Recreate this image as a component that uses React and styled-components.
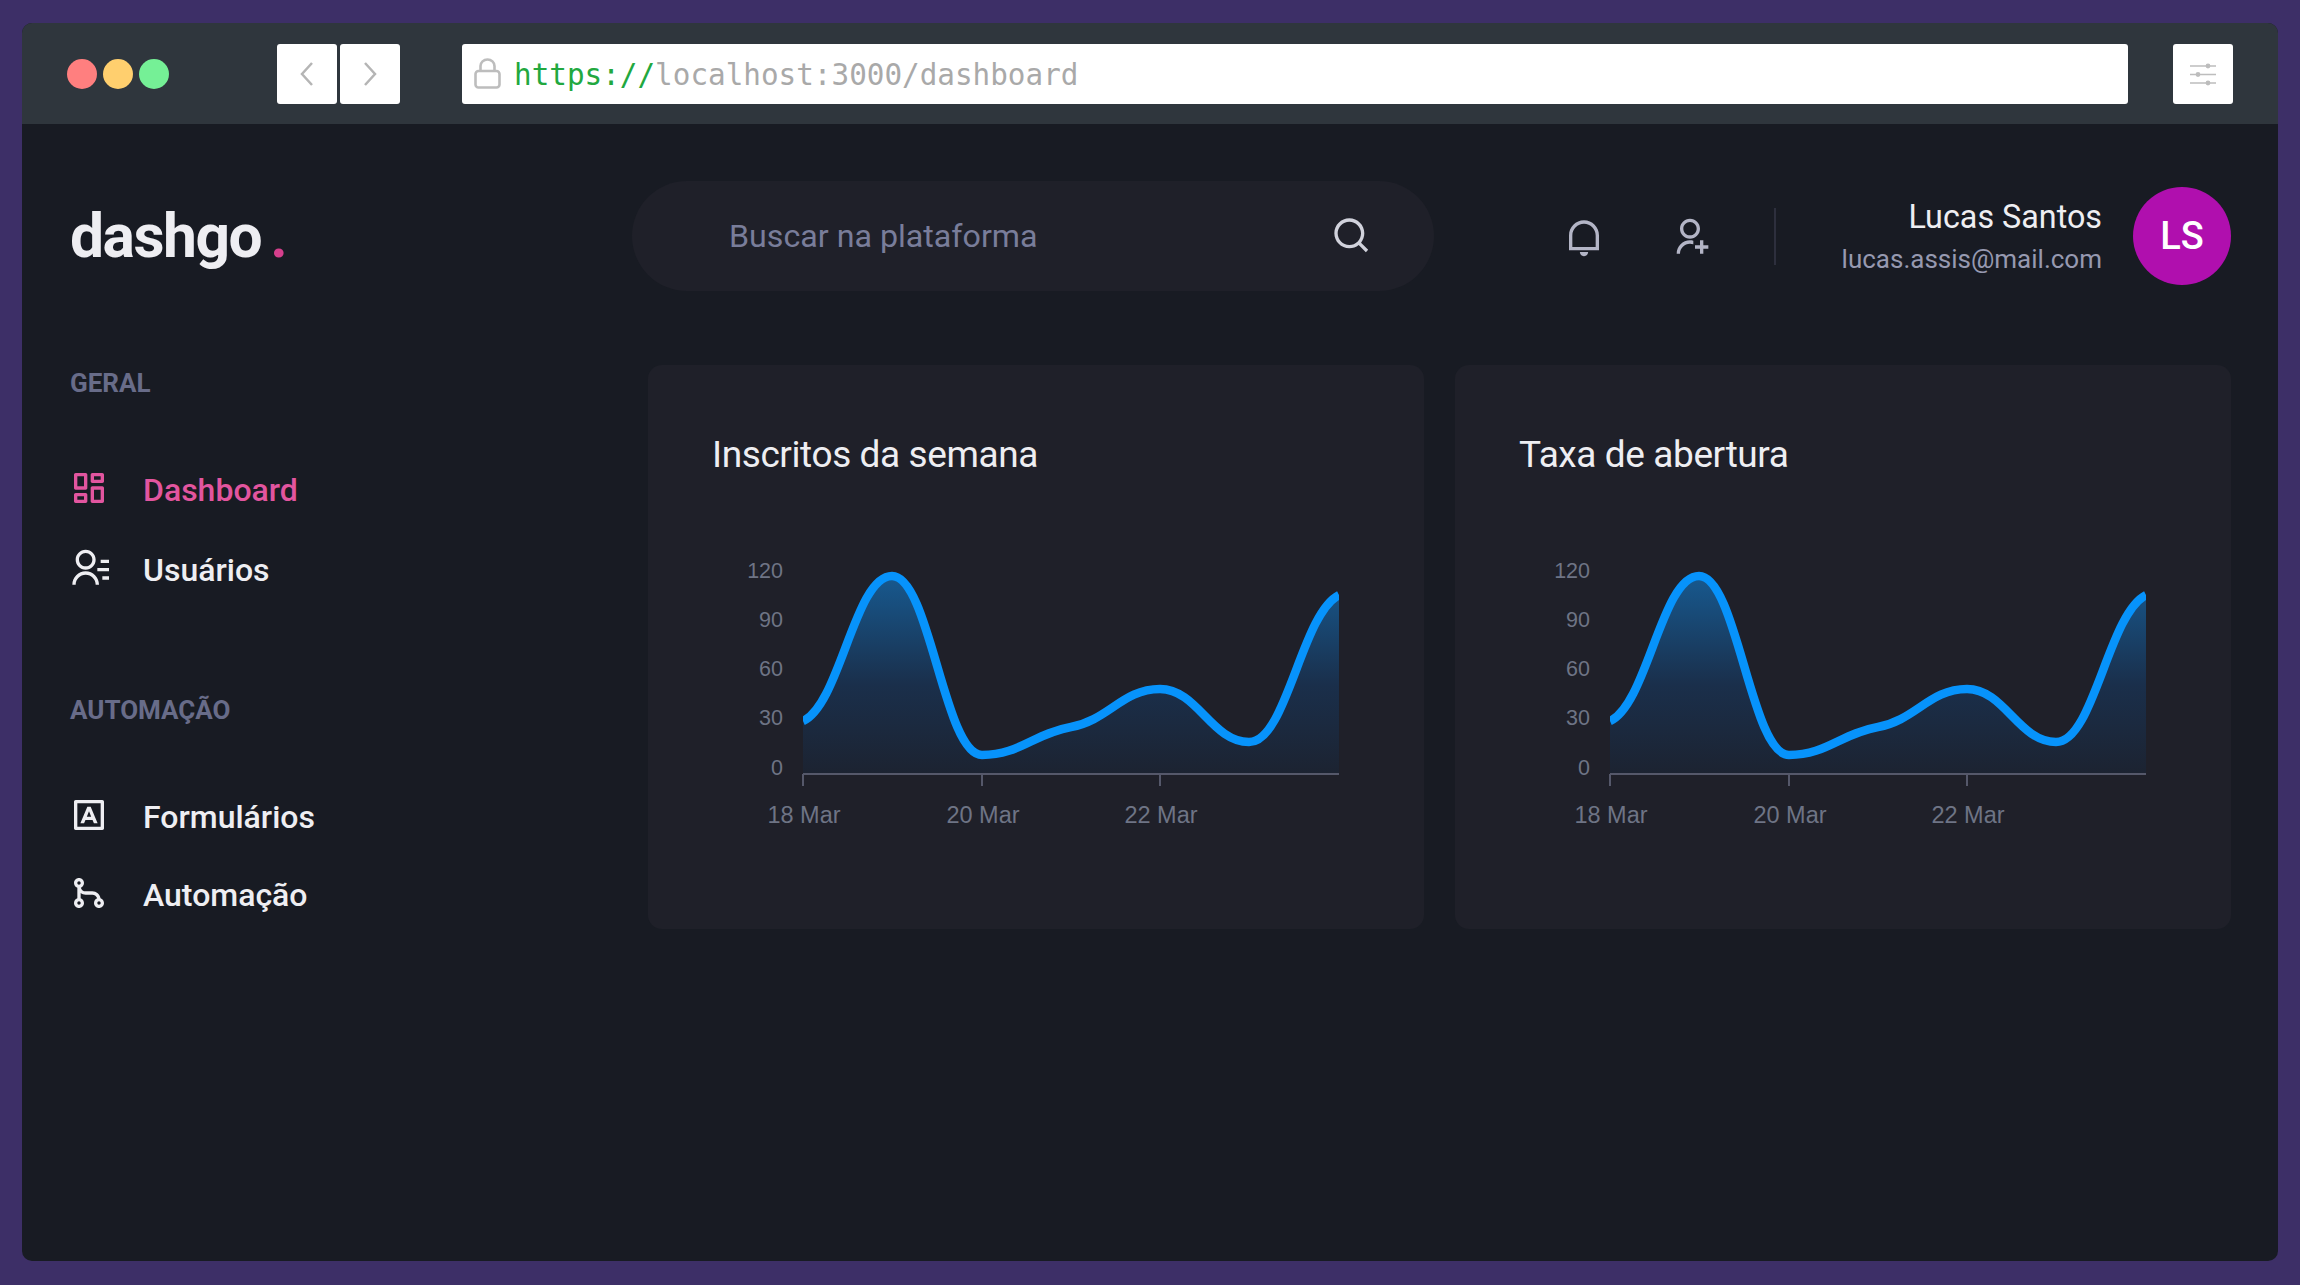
import React from "react";
import styled, { createGlobalStyle } from "styled-components";
import {
  RiDashboardLine,
  RiContactsLine,
  RiInputMethodLine,
  RiGitMergeLine,
  RiNotificationLine,
  RiUserAddLine,
  RiSearchLine,
} from "react-icons/ri";

const GlobalStyle = createGlobalStyle`
  html, body { margin: 0; padding: 0; }
  body { background: #3d2f67; font-family: Roboto, "Liberation Sans", sans-serif; }
  * { box-sizing: border-box; }
`;

const Page = styled.div`
  height: 1285px;
  padding: 23px 22px 24px;
`;

const Browser = styled.div`
  height: 100%;
  display: flex;
  flex-direction: column;
  background: #181b23;
  border-radius: 10px;
  overflow: hidden;
`;

const Toolbar = styled.div`
  height: 101px;
  flex: none;
  display: flex;
  align-items: center;
  padding: 0 45px;
  background: #2f363d;
`;

const Lights = styled.div`
  display: flex;
  gap: 6px;
  margin-right: 108px;
`;

const Light = styled.span`
  width: 30px;
  height: 30px;
  border-radius: 50%;
  background: ${(p) => p.$color};
`;

const NavButtons = styled.div`
  display: flex;
  gap: 3px;
  margin-right: 62px;
`;

const ToolButton = styled.div`
  width: 60px;
  height: 60px;
  flex: none;
  display: flex;
  align-items: center;
  justify-content: center;
  background: #fff;
  border-radius: 3px;
`;

const UrlBar = styled.div`
  flex: none;
  width: 1666px;
  height: 60px;
  display: flex;
  align-items: center;
  gap: 13px;
  padding-left: 12px;
  margin-right: 45px;
  background: #fff;
  border-radius: 3px;
  font-family: "DejaVu Sans Mono", monospace;
  font-size: 29.3px;
  color: #a9a9a9;
`;

const UrlText = styled.span`
  padding-top: 2px;
`;

const Scheme = styled.span`
  color: #22a83f;
`;

const Main = styled.div`
  flex: 1;
  padding: 56px 47px 0 48px;
`;

const Header = styled.header`
  height: 112px;
  display: flex;
  align-items: center;
`;

const Logo = styled.div`
  flex: 0 0 562px;
  font-size: 60.5px;
  font-weight: 700;
  letter-spacing: -1.5px;
  color: #eeeef2;
`;

const LogoDot = styled.span`
  margin-left: 9px;
  color: #d53f8c;
`;

const SearchBox = styled.div`
  flex: 0 0 802px;
  height: 110px;
  display: flex;
  align-items: center;
  justify-content: space-between;
  padding: 0 63px 0 97px;
  background: #1f2029;
  border-radius: 55px;
  font-size: 32.2px;
  color: #797d9a;
  svg { color: #d1d2dc; margin-top: -2px; }
`;

const Actions = styled.div`
  display: flex;
  align-items: center;
  gap: 66px;
  margin-left: 130px;
  padding-top: 2px;
  color: #b3b5c6;
`;

const Divider = styled.div`
  width: 2px;
  height: 57px;
  margin-left: 64px;
  background: #2d2f3d;
`;

const Profile = styled.div`
  margin-left: auto;
  display: flex;
  align-items: center;
  gap: 31px;
`;

const ProfileText = styled.div`
  padding-top: 3px;
  text-align: right;
`;

const ProfileName = styled.div`
  font-size: 32.3px;
  line-height: 42px;
  color: #eeeef2;
`;

const ProfileMail = styled.div`
  font-size: 26px;
  line-height: 42px;
  color: #9699b0;
`;

const Avatar = styled.div`
  width: 98px;
  height: 98px;
  display: flex;
  align-items: center;
  justify-content: center;
  border-radius: 50%;
  background: #b00fae;
  color: #fff;
  font-size: 38px;
  font-weight: 500;
`;

const Content = styled.div`
  display: flex;
  margin-top: 73px;
`;

const Sidebar = styled.nav`
  flex: 0 0 578px;
`;

const Section = styled.section`
  margin-bottom: 102px;
`;

const SectionTitle = styled.div`
  font-size: 26px;
  line-height: 36px;
  font-weight: 700;
  color: #686c89;
  margin-bottom: 69px;
`;

const NavList = styled.div`
  display: flex;
  flex-direction: column;
  gap: ${(p) => p.$gap}px;
`;

const NavItem = styled.a`
  height: 40px;
  display: flex;
  align-items: center;
  gap: 34px;
  margin-left: -1px;
  font-size: 32px;
  font-weight: 500;
  color: ${(p) => (p.$active ? "#e2559f" : "#eeeef2")};
  svg { margin-top: -4px; }
`;

const Cards = styled.div`
  flex: 1;
  display: grid;
  grid-template-columns: 1fr 1fr;
  gap: 31px;
`;

const Card = styled.div`
  height: 564px;
  padding: 65px 64px 0;
  background: #1f2029;
  border-radius: 14px;
`;

const CardTitle = styled.h2`
  margin: 0 0 54px;
  font-size: 37px;
  line-height: 50px;
  font-weight: 400;
  color: #eeeef2;
  letter-spacing: -0.4px;
`;

const ChartBox = styled.svg`
  display: block;
  width: 647px;
  height: 280px;
  overflow: visible;
  text {
    font-family: "Liberation Sans", Arial, sans-serif;
    fill: #6e7485;
  }
`;

// chart points, in svg coordinates, with the slope at each point
const points = [
  [91, 187, -0.45],
  [180, 42, 0],
  [270, 221, 0],
  [359, 193, -0.18],
  [448, 155, 0],
  [537, 208, 0],
  [627, 61, -0.5],
];
const AXIS_Y = 240;

const buildLine = () => {
  let d = `M${points[0][0]} ${points[0][1]}`;
  for (let i = 1; i < points.length; i++) {
    const [x0, y0, m0] = points[i - 1];
    const [x1, y1, m1] = points[i];
    const k = (x1 - x0) * 0.42;
    d += ` C${x0 + k} ${y0 + m0 * k} ${x1 - k} ${y1 - m1 * k} ${x1} ${y1}`;
  }
  return d;
};

const yTicks = [
  ["120", 44],
  ["90", 93],
  ["60", 142],
  ["30", 191],
  ["0", 241],
];
const xTicks = [
  ["18 Mar", 91],
  ["20 Mar", 270],
  ["22 Mar", 448],
];

function Chart({ id }) {
  const line = buildLine();
  return (
    <ChartBox viewBox="0 0 647 280">
      <defs>
        <linearGradient id={id} x1="0" y1="42" x2="0" y2={AXIS_Y} gradientUnits="userSpaceOnUse">
          <stop offset="0" stopColor="#17598f" />
          <stop offset="0.55" stopColor="#1a2f4b" />
          <stop offset="1" stopColor="#1c2331" />
        </linearGradient>
        <clipPath id={`${id}-clip`}>
          <rect x="91" y="0" width="536" height="260" />
        </clipPath>
      </defs>
      <path d={`${line} L627 ${AXIS_Y} L91 ${AXIS_Y} Z`} fill={`url(#${id})`} />
      <path d={line} fill="none" stroke="#0793fb" strokeWidth="8.5" clipPath={`url(#${id}-clip)`} />
      <path d={`M91 ${AXIS_Y}H627`} stroke="#55586a" strokeWidth="2" />
      {xTicks.map(([label, x]) => (
        <g key={label}>
          <path d={`M${x} ${AXIS_Y}v12`} stroke="#55586a" strokeWidth="2" />
          <text x={x + 1} y="289" textAnchor="middle" fontSize="23.5">{label}</text>
        </g>
      ))}
      {yTicks.map(([label, y]) => (
        <text key={label} x="71" y={y} textAnchor="end" fontSize="21.5">{label}</text>
      ))}
    </ChartBox>
  );
}

const menu = [
  { title: "GERAL", gap: 40, items: [
    { label: "Dashboard", Icon: RiDashboardLine, active: true },
    { label: "Usuários", Icon: RiContactsLine },
  ] },
  { title: "AUTOMAÇÃO", gap: 38, items: [
    { label: "Formulários", Icon: RiInputMethodLine },
    { label: "Automação", Icon: RiGitMergeLine },
  ] },
];

export default function App() {
  return (
    <Page>
      <GlobalStyle />
      <Browser>
        <Toolbar>
          <Lights>
            <Light $color="#ff7f7f" />
            <Light $color="#ffcf6e" />
            <Light $color="#75f096" />
          </Lights>
          <NavButtons>
            <ToolButton>
              <svg width="16" height="26" viewBox="0 0 16 26" fill="none" stroke="#b5b5b5" strokeWidth="2.5"><path d="M13 2 3 13l10 11" /></svg>
            </ToolButton>
            <ToolButton>
              <svg width="16" height="26" viewBox="0 0 16 26" fill="none" stroke="#b5b5b5" strokeWidth="2.5"><path d="m3 2 10 11L3 24" /></svg>
            </ToolButton>
          </NavButtons>
          <UrlBar>
            <svg width="27" height="31" viewBox="0 0 27 31" fill="none" stroke="#bdbdbd" strokeWidth="2.6">
              <rect x="1.5" y="13" width="24" height="16.5" rx="3" />
              <path d="M6.5 13V8a7 6.5 0 0 1 14 0v5" />
            </svg>
            <UrlText><Scheme>https://</Scheme>localhost:3000/dashboard</UrlText>
          </UrlBar>
          <ToolButton>
            <svg width="28" height="24" viewBox="0 0 28 24" fill="#bdbdbd" stroke="#bdbdbd" strokeWidth="1.6">
              <path d="M1 4h26M1 12.500h26M1 21h26" />
              <circle cx="19" cy="4" r="1.600" />
              <circle cx="9" cy="12.500" r="1.600" />
              <circle cx="19" cy="21" r="1.600" />
            </svg>
          </ToolButton>
        </Toolbar>
        <Main>
          <Header>
            <Logo>dashgo<LogoDot>.</LogoDot></Logo>
            <SearchBox>
              <span>Buscar na plataforma</span>
              <RiSearchLine size={40} />
            </SearchBox>
            <Actions>
              <RiNotificationLine size={40} />
              <RiUserAddLine size={40} />
            </Actions>
            <Divider />
            <Profile>
              <ProfileText>
                <ProfileName>Lucas Santos</ProfileName>
                <ProfileMail>lucas.assis@mail.com</ProfileMail>
              </ProfileText>
              <Avatar>LS</Avatar>
            </Profile>
          </Header>
          <Content>
            <Sidebar>
              {menu.map((section) => (
                <Section key={section.title}>
                  <SectionTitle>{section.title}</SectionTitle>
                  <NavList $gap={section.gap}>
                    {section.items.map(({ label, Icon, active }) => (
                      <NavItem key={label} $active={active}>
                        <Icon size={40} />
                        {label}
                      </NavItem>
                    ))}
                  </NavList>
                </Section>
              ))}
            </Sidebar>
            <Cards>
              <Card>
                <CardTitle>Inscritos da semana</CardTitle>
                <Chart id="week" />
              </Card>
              <Card>
                <CardTitle>Taxa de abertura</CardTitle>
                <Chart id="rate" />
              </Card>
            </Cards>
          </Content>
        </Main>
      </Browser>
    </Page>
  );
}
